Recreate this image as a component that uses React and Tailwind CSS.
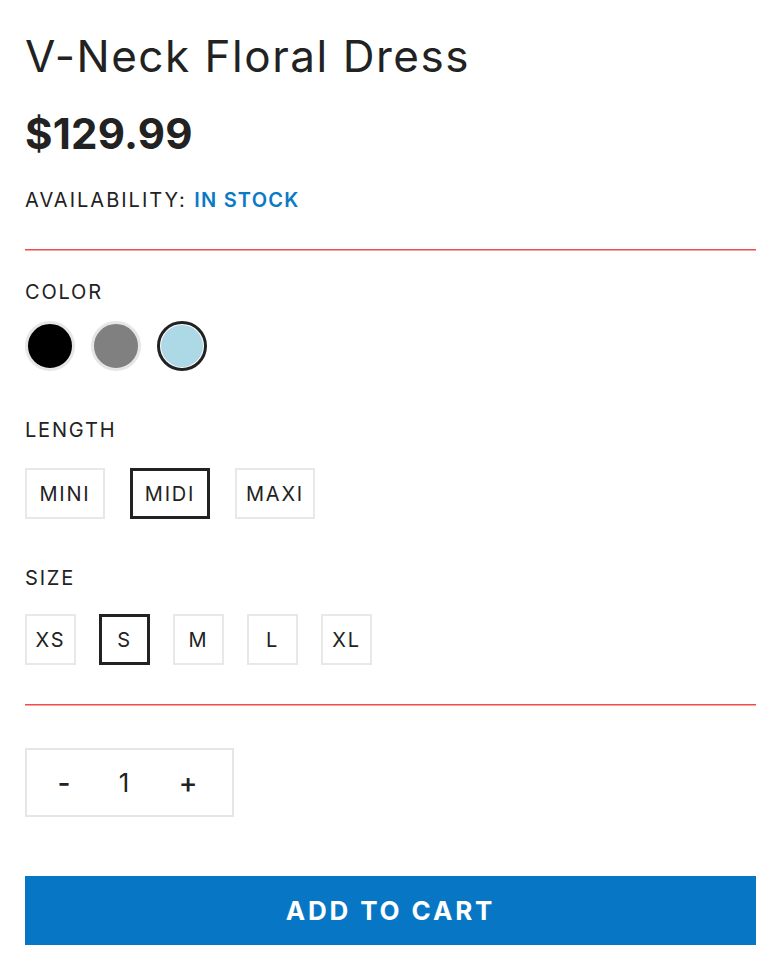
import React from "react";

function Label({ children, className = "" }) {
  return (
    <div className={"text-[20px] leading-none text-[#222] tracking-[0.09em] " + className}>
      {children}
    </div>
  );
}

function RedLine({ className = "" }) {
  return (
    <div
      className={
        "h-[2px] border-t border-b border-t-[#f04a4a] border-b-[#f8a4a4] " + className
      }
    />
  );
}

export default function App() {
  const lengths = ["MINI", "MIDI", "MAXI"];
  const sizes = ["XS", "S", "M", "L", "XL"];
  return (
    <div className="min-h-[963px] bg-white pl-[25px] pt-[34px] font-['Inter',sans-serif] text-[#222]">
      <div className="w-[731px] flex flex-col">
        <h1 className="text-[44px] leading-none font-normal tracking-[0.035em] text-[#222]">
          V-Neck Floral Dress
        </h1>
        <div className="mt-[35px] text-[42px] leading-none font-bold tracking-[0.005em] text-[#222]">
          $129.99
        </div>
        <div className="mt-[35px] text-[20px] leading-none tracking-[0.1em] text-[#222]">
          AVAILABILITY: <span className="font-semibold text-[#0a7ac6] tracking-[0.06em]">IN STOCK</span>
        </div>
        <RedLine className="mt-[39px]" />

        <Label className="mt-[31px]">COLOR</Label>
        <div className="mt-[19px] flex gap-[16px]">
          <div className="w-[50px] h-[50px] rounded-full border-[3px] border-[#e6e6e6] bg-black" />
          <div className="w-[50px] h-[50px] rounded-full border-[3px] border-[#e6e6e6] bg-[#808080]" />
          <div className="w-[50px] h-[50px] rounded-full border-[3px] border-[#222] p-[1px] bg-white">
            <div className="w-full h-full rounded-full bg-[#add8e6]" />
          </div>
        </div>

        <Label className="mt-[49px]">LENGTH</Label>
        <div className="mt-[28px] flex gap-[25px]">
          {lengths.map((l) => (
            <div
              key={l}
              className={
                "w-[80px] h-[51px] flex items-center justify-center text-[20px] tracking-[0.09em] text-[#222] " +
                (l === "MIDI" ? "border-[3px] border-[#222]" : "border-2 border-[#e8e8e8]")
              }
            >
              {l}
            </div>
          ))}
        </div>

        <Label className="mt-[49px]">SIZE</Label>
        <div className="mt-[26px] flex gap-[23px]">
          {sizes.map((s) => (
            <div
              key={s}
              className={
                "w-[51px] h-[51px] flex items-center justify-center text-[20px] tracking-[0.09em] text-[#222] " +
                (s === "S" ? "border-[3px] border-[#222]" : "border-2 border-[#e8e8e8]")
              }
            >
              {s}
            </div>
          ))}
        </div>

        <RedLine className="mt-[39px]" />

        <div className="mt-[42px] w-[209px] h-[69px] border-2 border-[#e6e6e6] flex items-center pl-[17px]">
          <button className="w-[40px] text-[28px] leading-none text-[#222] text-center font-medium">-</button>
          <div className="w-[80px] text-[26px] leading-none text-[#222] text-center">1</div>
          <button className="ml-[4px] w-[40px] text-[28px] leading-none text-[#222] text-center font-medium">+</button>
        </div>

        <button className="mt-[59px] w-full h-[69px] bg-[#0777c5] text-white text-[26px] font-bold tracking-[0.11em] leading-none flex items-center justify-center">
          ADD TO CART
        </button>
      </div>
    </div>
  );
}
